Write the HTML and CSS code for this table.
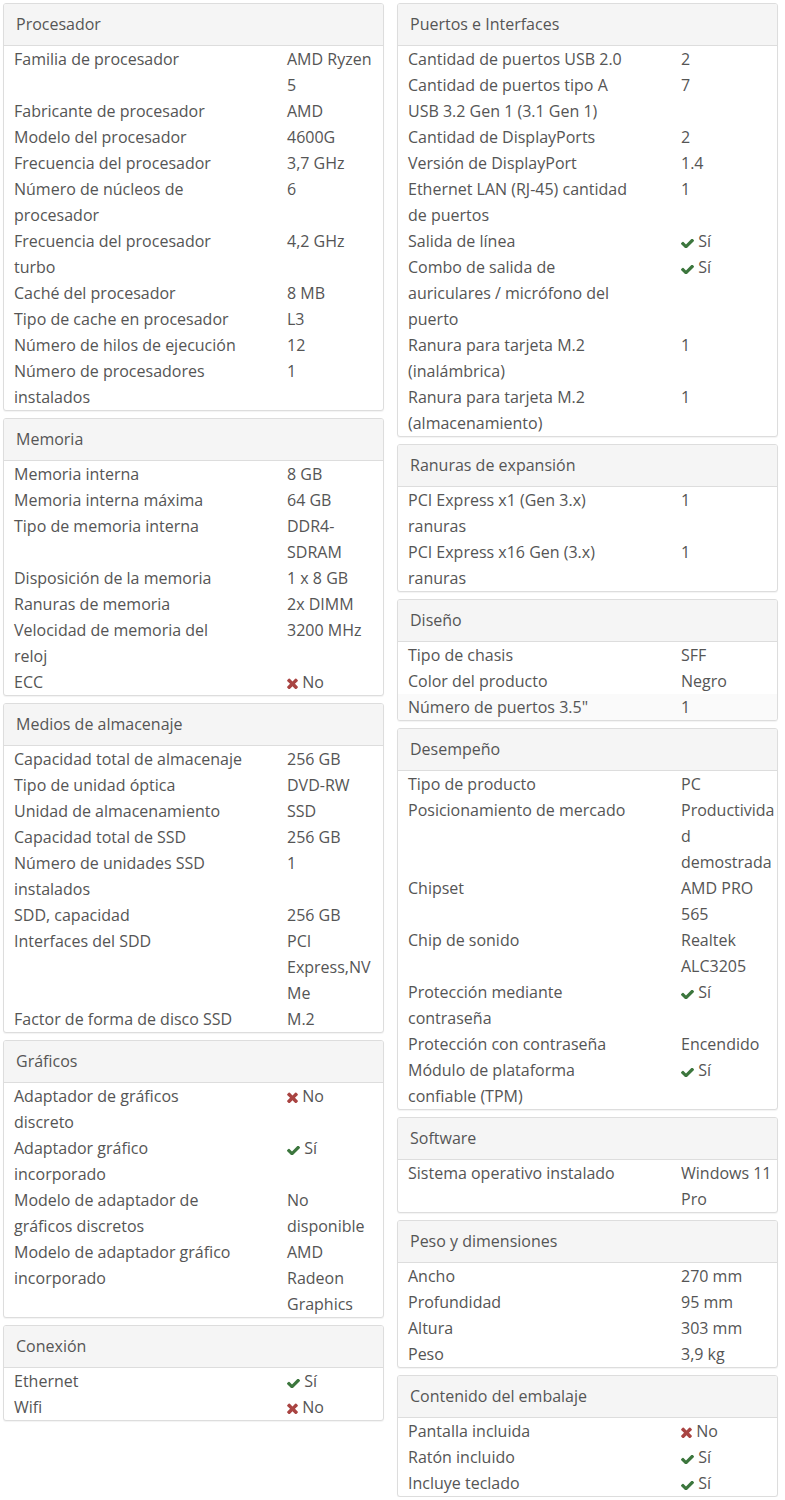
FILE: index.html
```html
<!DOCTYPE html>
<html lang="es">
<head>
    <meta charset="UTF-8">
    <meta name="viewport" content="width=device-width, initial-scale=1.0">
    <title>Especificaciones</title>
    <link rel="stylesheet" href="styles.css">
</head>
<body>
    <svg class="defs" width="0" height="0">
        <symbol id="ico-check" viewBox="121 402 1550 1024">
            <path d="M1671 566q0 40-28 68l-724 724-136 136q-28 28-68 28t-68-28l-136-136-362-362q-28-28-28-68t28-68l136-136q28-28 68-28t68 28l294 295 656-657q28-28 68-28t68 28l136 136q28 28 28 68z"/>
        </symbol>
        <symbol id="ico-times" viewBox="302 314 1188 1212">
            <path d="M1490 1322q0 40-28 68l-136 136q-28 28-68 28t-68-28l-294-294-294 294q-28 28-68 28t-68-28l-136-136q-28-28-28-68t28-68l294-294-294-294q-28-28-28-68t28-68l136-136q28-28 68-28t68 28l294 294 294-294q28-28 68-28t68 28l136 136q28 28 28 68t-28 68l-294 294 294 294q28 28 28 68z"/>
        </symbol>
    </svg>

    <div class="specs">
        <div class="col">
            <div class="panel">
                <div class="panel-heading">Procesador</div>
                <div class="spec"><span>Familia de procesador</span><span>AMD Ryzen 5</span></div>
                <div class="spec"><span>Fabricante de procesador</span><span>AMD</span></div>
                <div class="spec"><span>Modelo del procesador</span><span>4600G</span></div>
                <div class="spec"><span>Frecuencia del procesador</span><span>3,7 GHz</span></div>
                <div class="spec"><span>Número de núcleos de procesador</span><span>6</span></div>
                <div class="spec"><span>Frecuencia del procesador turbo</span><span>4,2 GHz</span></div>
                <div class="spec"><span>Caché del procesador</span><span>8 MB</span></div>
                <div class="spec"><span>Tipo de cache en procesador</span><span>L3</span></div>
                <div class="spec"><span>Número de hilos de ejecución</span><span>12</span></div>
                <div class="spec"><span>Número de procesadores instalados</span><span>1</span></div>
            </div>

            <div class="panel">
                <div class="panel-heading">Memoria</div>
                <div class="spec"><span>Memoria interna</span><span>8 GB</span></div>
                <div class="spec"><span>Memoria interna máxima</span><span>64 GB</span></div>
                <div class="spec"><span>Tipo de memoria interna</span><span>DDR4-SDRAM</span></div>
                <div class="spec"><span>Disposición de la memoria</span><span>1 x 8 GB</span></div>
                <div class="spec"><span>Ranuras de memoria</span><span>2x DIMM</span></div>
                <div class="spec"><span>Velocidad de memoria del reloj</span><span>3200 MHz</span></div>
                <div class="spec"><span>ECC</span><span><svg class="ico no"><use href="#ico-times"/></svg> No</span></div>
            </div>

            <div class="panel">
                <div class="panel-heading">Medios de almacenaje</div>
                <div class="spec"><span>Capacidad total de almacenaje</span><span>256 GB</span></div>
                <div class="spec"><span>Tipo de unidad óptica</span><span>DVD-RW</span></div>
                <div class="spec"><span>Unidad de almacenamiento</span><span>SSD</span></div>
                <div class="spec"><span>Capacidad total de SSD</span><span>256 GB</span></div>
                <div class="spec"><span>Número de unidades SSD instalados</span><span>1</span></div>
                <div class="spec"><span>SDD, capacidad</span><span>256 GB</span></div>
                <div class="spec"><span>Interfaces del SDD</span><span>PCI Express,NVMe</span></div>
                <div class="spec"><span>Factor de forma de disco SSD</span><span>M.2</span></div>
            </div>

            <div class="panel">
                <div class="panel-heading">Gráficos</div>
                <div class="spec"><span>Adaptador de gráficos discreto</span><span><svg class="ico no"><use href="#ico-times"/></svg> No</span></div>
                <div class="spec"><span>Adaptador gráfico incorporado</span><span><svg class="ico yes"><use href="#ico-check"/></svg> Sí</span></div>
                <div class="spec"><span>Modelo de adaptador de gráficos discretos</span><span>No disponible</span></div>
                <div class="spec"><span>Modelo de adaptador gráfico incorporado</span><span>AMD Radeon Graphics</span></div>
            </div>

            <div class="panel">
                <div class="panel-heading">Conexión</div>
                <div class="spec"><span>Ethernet</span><span><svg class="ico yes"><use href="#ico-check"/></svg> Sí</span></div>
                <div class="spec"><span>Wifi</span><span><svg class="ico no"><use href="#ico-times"/></svg> No</span></div>
            </div>
        </div>

        <div class="col">
            <div class="panel">
                <div class="panel-heading">Puertos e Interfaces</div>
                <div class="spec"><span>Cantidad de puertos USB 2.0</span><span>2</span></div>
                <div class="spec"><span>Cantidad de puertos tipo A USB 3.2 Gen 1 (3.1 Gen 1)</span><span>7</span></div>
                <div class="spec"><span>Cantidad de DisplayPorts</span><span>2</span></div>
                <div class="spec"><span>Versión de DisplayPort</span><span>1.4</span></div>
                <div class="spec"><span>Ethernet LAN (RJ-45) cantidad de puertos</span><span>1</span></div>
                <div class="spec"><span>Salida de línea</span><span><svg class="ico yes"><use href="#ico-check"/></svg> Sí</span></div>
                <div class="spec"><span>Combo de salida de auriculares / micrófono del puerto</span><span><svg class="ico yes"><use href="#ico-check"/></svg> Sí</span></div>
                <div class="spec"><span>Ranura para tarjeta M.2 (inalámbrica)</span><span>1</span></div>
                <div class="spec"><span>Ranura para tarjeta M.2 (almacenamiento)</span><span>1</span></div>
            </div>

            <div class="panel">
                <div class="panel-heading">Ranuras de expansión</div>
                <div class="spec"><span>PCI Express x1 (Gen 3.x) ranuras</span><span>1</span></div>
                <div class="spec"><span>PCI Express x16 Gen (3.x) ranuras</span><span>1</span></div>
            </div>

            <div class="panel">
                <div class="panel-heading">Diseño</div>
                <div class="spec"><span>Tipo de chasis</span><span>SFF</span></div>
                <div class="spec"><span>Color del producto</span><span>Negro</span></div>
                <div class="spec faded"><span>Número de puertos 3.5"</span><span>1</span></div>
            </div>

            <div class="panel">
                <div class="panel-heading">Desempeño</div>
                <div class="spec"><span>Tipo de producto</span><span>PC</span></div>
                <div class="spec"><span>Posicionamiento de mercado</span><span>Productividad demostrada</span></div>
                <div class="spec"><span>Chipset</span><span>AMD PRO 565</span></div>
                <div class="spec"><span>Chip de sonido</span><span>Realtek ALC3205</span></div>
                <div class="spec"><span>Protección mediante contraseña</span><span><svg class="ico yes"><use href="#ico-check"/></svg> Sí</span></div>
                <div class="spec"><span>Protección con contraseña</span><span>Encendido</span></div>
                <div class="spec"><span>Módulo de plataforma confiable (TPM)</span><span><svg class="ico yes"><use href="#ico-check"/></svg> Sí</span></div>
            </div>

            <div class="panel">
                <div class="panel-heading">Software</div>
                <div class="spec"><span>Sistema operativo instalado</span><span>Windows 11 Pro</span></div>
            </div>

            <div class="panel">
                <div class="panel-heading">Peso y dimensiones</div>
                <div class="spec"><span>Ancho</span><span>270 mm</span></div>
                <div class="spec"><span>Profundidad</span><span>95 mm</span></div>
                <div class="spec"><span>Altura</span><span>303 mm</span></div>
                <div class="spec"><span>Peso</span><span>3,9 kg</span></div>
            </div>

            <div class="panel">
                <div class="panel-heading">Contenido del embalaje</div>
                <div class="spec"><span>Pantalla incluida</span><span><svg class="ico no"><use href="#ico-times"/></svg> No</span></div>
                <div class="spec"><span>Ratón incluido</span><span><svg class="ico yes"><use href="#ico-check"/></svg> Sí</span></div>
                <div class="spec"><span>Incluye teclado</span><span><svg class="ico yes"><use href="#ico-check"/></svg> Sí</span></div>
            </div>
        </div>
    </div>
</body>
</html>
```

FILE: styles.css
```css
* {
    box-sizing: border-box;
}

body {
    margin: 0;
    background: #fff;
    color: #555;
    font-family: 'Open Sans', 'Liberation Sans', sans-serif;
    font-size: 16px;
    line-height: 26px;
}

.defs {
    position: absolute;
    width: 0;
    height: 0;
}

.specs {
    display: grid;
    grid-template-columns: 381px 381px;
    column-gap: 13px;
    align-items: start;
    padding: 3px 0 0 3px;
}

.col {
    display: flex;
    flex-direction: column;
    gap: 7px;
}

.panel {
    background: #fff;
    border: 1px solid #ddd;
    border-radius: 3px;
    box-shadow: 0 1px 1px rgba(0, 0, 0, 0.05);
    overflow: hidden;
}

.panel-heading {
    background: #f5f5f5;
    border-bottom: 1px solid #ddd;
    padding: 10px 12px;
    font-size: 16px;
    line-height: 21px;
    color: #555;
}

.spec {
    display: grid;
    grid-template-columns: 228.5px 1fr;
    column-gap: 44.5px;
    padding: 0 2px 0 10px;
}

.spec span {
    overflow-wrap: break-word;
    min-width: 0;
}

.spec.faded {
    background: #fafafa;
}

.ico {
    display: inline-block;
    vertical-align: -1px;
    fill: currentColor;
}

.ico.yes {
    width: 13px;
    height: 9px;
    color: #3c763d;
}

.ico.no {
    width: 11px;
    height: 11px;
    color: #a94442;
}
```
